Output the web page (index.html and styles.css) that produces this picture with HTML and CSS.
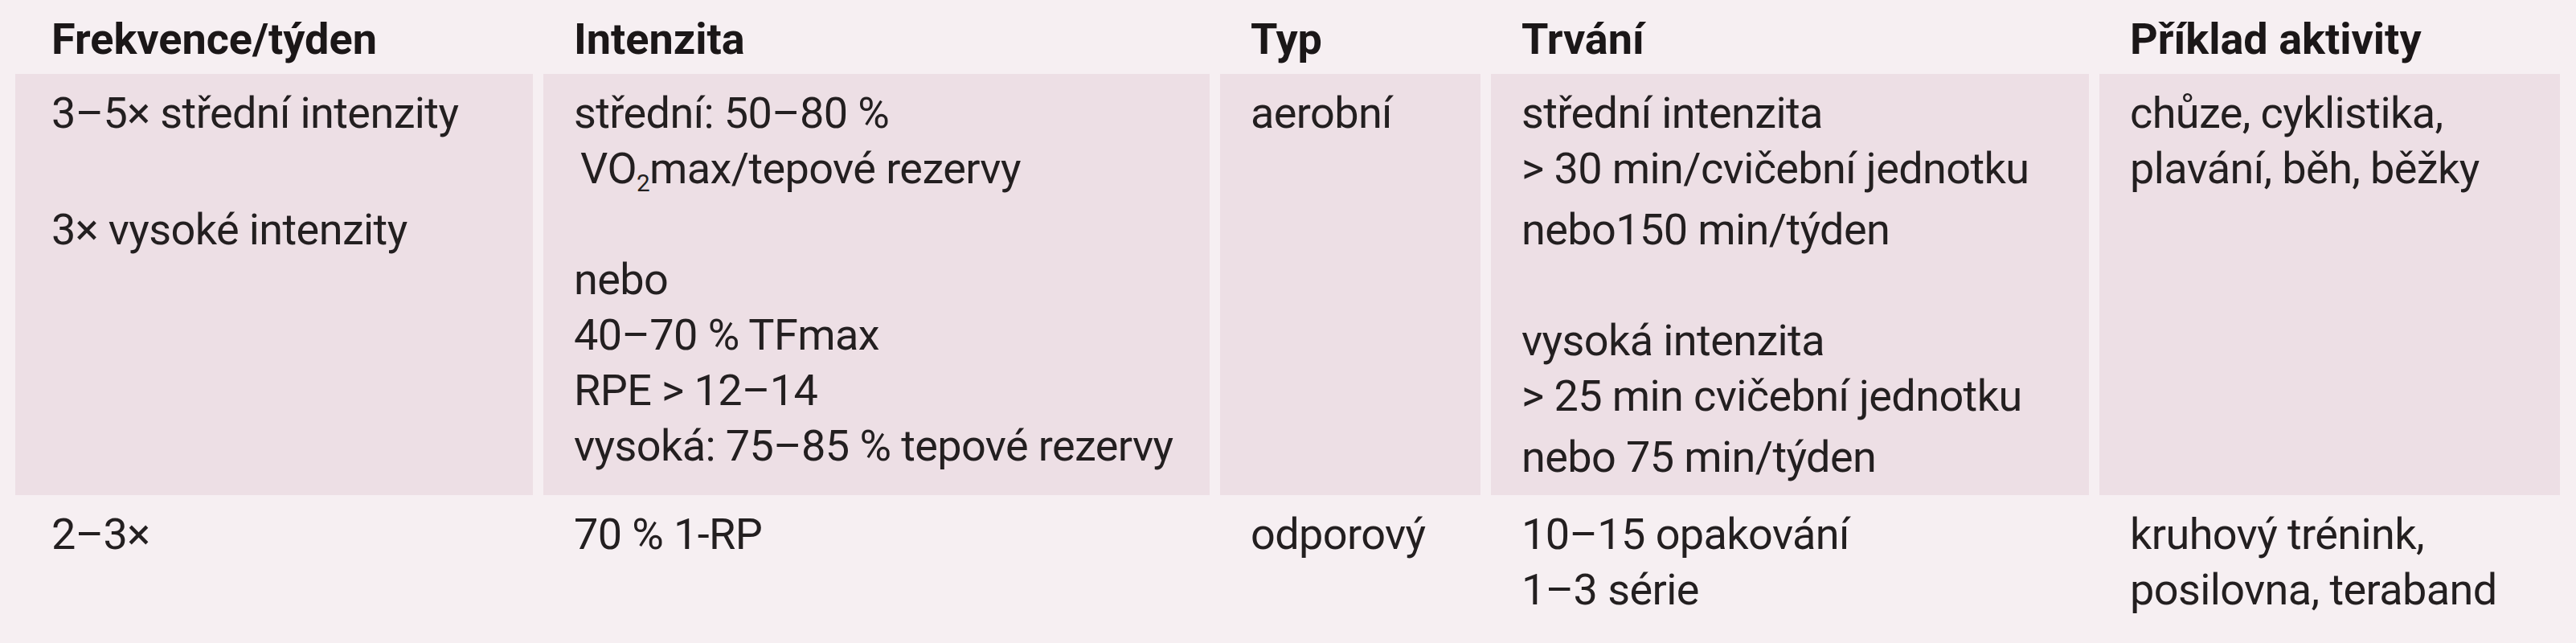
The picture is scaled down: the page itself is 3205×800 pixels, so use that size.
FILE: index.html
```html
<!DOCTYPE html>
<html lang="cs">
<head>
<meta charset="utf-8">
<title>Doporučení pohybové aktivity</title>
<link rel="stylesheet" href="styles.css">
</head>
<body>
<table class="rx">
  <colgroup>
    <col class="w1"><col class="w2"><col class="w3"><col class="w4"><col class="w5">
  </colgroup>
  <thead>
    <tr class="row-head">
      <th class="c1">Frekvence/týden</th>
      <th>Intenzita</th>
      <th>Typ</th>
      <th>Trvání</th>
      <th>Příklad aktivity</th>
    </tr>
  </thead>
  <tbody>
    <tr class="row-aer">
      <td class="c1">
        <span class="ln">3–5× střední intenzity</span>
        <span class="ln">&nbsp;</span>
        <span class="ln gap">3× vysoké intenzity</span>
      </td>
      <td>
        <span class="ln">střední: 50–80 %</span>
        <span class="ln indent">VO<sub>2</sub>max/tepové rezervy</span>
        <span class="ln">&nbsp;</span>
        <span class="ln">nebo</span>
        <span class="ln">40–70 % TFmax</span>
        <span class="ln">RPE &gt; 12–14</span>
        <span class="ln">vysoká: 75–85 % tepové rezervy</span>
      </td>
      <td>
        <span class="ln">aerobní</span>
      </td>
      <td>
        <span class="ln">střední intenzita</span>
        <span class="ln">&gt; 30 min/cvičební jednotku</span>
        <span class="ln gap">nebo150 min/týden</span>
        <span class="ln">&nbsp;</span>
        <span class="ln">vysoká intenzita</span>
        <span class="ln">&gt; 25 min cvičební jednotku</span>
        <span class="ln gap">nebo 75 min/týden</span>
      </td>
      <td>
        <span class="ln">chůze, cyklistika,</span>
        <span class="ln">plavání, běh, běžky</span>
      </td>
    </tr>
    <tr class="row-res">
      <td class="c1"><span class="ln">2–3×</span></td>
      <td><span class="ln">70 % 1-RP</span></td>
      <td><span class="ln">odporový</span></td>
      <td>
        <span class="ln">10–15 opakování</span>
        <span class="ln">1–3 série</span>
      </td>
      <td>
        <span class="ln">kruhový trénink,</span>
        <span class="ln">posilovna, teraband</span>
      </td>
    </tr>
  </tbody>
</table>
</body>
</html>
```

FILE: styles.css
```css
html, body {
  margin: 0;
  padding: 0;
  background: #f6eff2;
}

body {
  font-family: Roboto, "Noto Sans", sans-serif;
  font-size: 54px;
  line-height: 69px;
  color: #231f20;
  overflow: hidden;
}

.rx {
  margin-left: 6px;
  width: 3192px;
  table-layout: fixed;
  border-collapse: separate;
  border-spacing: 13px 0;
}

.w1 { width: 644px; }
.w2 { width: 829px; }
.w3 { width: 324px; }
.w4 { width: 744px; }
.w5 { width: 573px; }

.rx th,
.rx td {
  box-sizing: border-box;
  padding: 14px 0 9px 38px;
  text-align: left;
  vertical-align: top;
  white-space: nowrap;
}

.rx td {
  letter-spacing: -0.6px;
}

.rx .c1 {
  padding-left: 45px;
}

.rx th {
  font-weight: 700;
  color: #1b1718;
}

.row-head { height: 92px; }
.row-aer { height: 524px; }
.row-res { height: 184px; }

.row-aer td {
  background: #eddfe5;
}

.ln {
  display: block;
}

.gap {
  margin-top: 7px;
}

.indent {
  padding-left: 8px;
}

sub {
  font-size: 0.55em;
  line-height: 0;
  vertical-align: -0.35em;
}
```
